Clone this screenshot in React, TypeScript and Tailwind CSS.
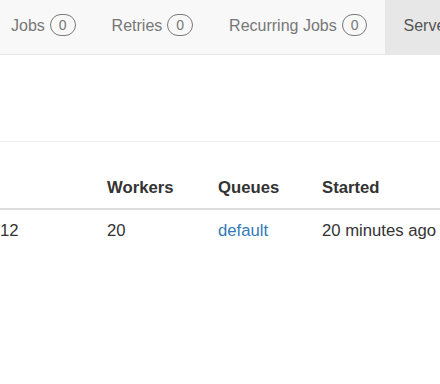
const font = { fontFamily: '"Liberation Sans", Arial, sans-serif' };

const Badge = ({ n }: { n: number }) => (
  <span className="ml-[5px] inline-flex h-[22px] items-center rounded-full border border-[#7a7a7a] px-[8px] text-[14px] leading-none text-[#777]">
    {n}
  </span>
);

const NavItem = ({ label, count, first }: { label: string; count: number; first?: boolean }) => (
  <div className={`flex h-[54px] items-center pb-[4px] ${first ? "pl-[11px] pr-[18px]" : "px-[18px]"}`}>
    <span className="text-[16px] leading-[23px] text-[#777]">{label}</span>
    <Badge n={count} />
  </div>
);

export default function App() {
  const cols = "grid grid-cols-[98px_111px_104px_1fr]";
  return (
    <div className="h-[384px] w-[440px] overflow-hidden bg-white" style={font}>
      {/* Navbar */}
      <div className="flex h-[55px] border-b border-[#e7e7e7] bg-[#f8f8f8] whitespace-nowrap">
        <NavItem label="Jobs" count={0} first />
        <NavItem label="Retries" count={0} />
        <NavItem label="Recurring Jobs" count={0} />
        <div className="flex h-[54px] min-w-0 flex-1 items-center overflow-hidden bg-[#e7e7e7] px-[18px] pb-[4px]">
          <span className="text-[16px] leading-[23px] text-[#555]">Servers</span>
        </div>
      </div>

      {/* Page header */}
      <div className="h-[87px] border-b border-[#eee]" />

      {/* Table */}
      <div className="mt-[25px] text-[16.7px] leading-[23px] text-[#333] whitespace-nowrap">
        <div className={`${cols} border-b-2 border-[#ddd] font-bold`}>
          <div className="py-[9px]" />
          <div className="p-[9px]">Workers</div>
          <div className="p-[9px]">Queues</div>
          <div className="p-[9px]">Started</div>
        </div>
        <div className={cols}>
          <div className="py-[9px]">12</div>
          <div className="p-[9px]">20</div>
          <div className="p-[9px]">
            <a className="text-[#337ab7]">default</a>
          </div>
          <div className="p-[9px]">20 minutes ago</div>
        </div>
      </div>
    </div>
  );
}
